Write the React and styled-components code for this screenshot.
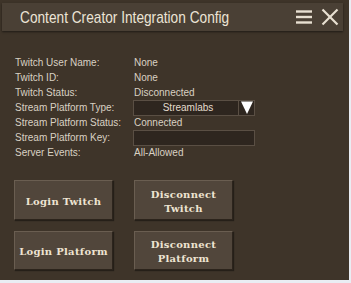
import React from "react";
import styled, { createGlobalStyle } from "styled-components";

const Global = createGlobalStyle`
  html, body { margin: 0; padding: 0; background: #e9edf3; }
  #root { width: 351px; height: 283px; }
`;

const Panel = styled.div`
  width: 349px;
  height: 280px;
  background: #3e3429;
  box-sizing: border-box;
  padding: 3px 6px 0 2px;
  display: flex;
  flex-direction: column;
`;

const Header = styled.div`
  height: 28px;
  background: #4a4035;
  box-shadow: 0 1px 2px rgba(0,0,0,0.5);
  display: flex;
  align-items: center;
  padding: 0 4px 0 18px;
  font-family: "Liberation Sans", Arial, sans-serif;
  font-size: 17px;
  color: #ece4d6;
`;

const TitleWrap = styled.div`
  flex: 1;
  margin-top: 1px;
  white-space: nowrap;
`;

const Title = styled.span`
  display: inline-block;
  transform: scaleX(0.805);
  transform-origin: 0 50%;
`;

const Icons = styled.div`
  display: flex;
  align-items: center;
  gap: 8px;
`;

const Form = styled.div`
  display: grid;
  grid-template-columns: 119px 121px;
  grid-auto-rows: 15px;
  margin: 24px 0 0 13px;
  font-family: "Liberation Sans", Arial, sans-serif;
  font-size: 10px;
  color: #d9d1c3;
  align-items: center;
`;

const Cell = styled.div`
  white-space: nowrap;
`;

const Select = styled.div`
  height: 16px;
  display: flex;
  border: 1px solid #5a4f44;
  background: #2e261f;
  box-sizing: border-box;
  margin-left: -1px;
`;

const SelectText = styled.div`
  flex: 1;
  text-align: center;
  line-height: 14px;
  color: #e4dccd;
  padding-left: 4px;
`;

const Arrow = styled.div`
  width: 15px;
  border-left: 1px solid #5a4f44;
  display: flex;
  align-items: center;
  justify-content: center;
`;

const Input = styled.div`
  height: 16px;
  border: 1px solid #5a4f44;
  background: #2e261f;
  box-sizing: border-box;
  margin-left: -1px;
`;

const Buttons = styled.div`
  display: grid;
  grid-template-columns: 99px 99px;
  grid-template-rows: 40px 39px;
  column-gap: 21px;
  row-gap: 11px;
  margin: 20px 0 0 12px;
`;

const Button = styled.button`
  background: #51463b;
  border: 1px solid #6a5e51;
  border-right-color: #2c241c;
  border-bottom-color: #2c241c;
  box-shadow: 1px 1px 1px rgba(0,0,0,0.4);
  color: #eee4d2;
  font-family: "DejaVu Serif", Georgia, serif;
  font-weight: bold;
  font-size: 10px;
  letter-spacing: 0.3px;
  line-height: 14px;
  padding: 3px 0 0 0;
  cursor: pointer;
`;

const rows = [
  ["Twitch User Name:", "None"],
  ["Twitch ID:", "None"],
  ["Twitch Status:", "Disconnected"],
  ["Stream Platform Type:", "select"],
  ["Stream Platform Status:", "Connected"],
  ["Stream Platform Key:", "input"],
  ["Server Events:", "All-Allowed"],
];

export default function App() {
  return (
    <>
      <Global />
      <Panel>
        <Header>
          <TitleWrap>
            <Title>Content Creator Integration Config</Title>
          </TitleWrap>
          <Icons>
            <svg width="18" height="16" viewBox="0 0 18 16">
              <g stroke="#e8e0d2" strokeWidth="2.4">
                <line x1="1" y1="2.5" x2="17" y2="2.5" />
                <line x1="1" y1="8" x2="17" y2="8" />
                <line x1="1" y1="13.5" x2="17" y2="13.5" />
              </g>
            </svg>
            <svg width="18" height="18" viewBox="0 0 18 18">
              <g stroke="#e8e0d2" strokeWidth="2.2">
                <line x1="1.5" y1="1.5" x2="16.5" y2="16.5" />
                <line x1="16.5" y1="1.5" x2="1.5" y2="16.5" />
              </g>
            </svg>
          </Icons>
        </Header>
        <Form>
          {rows.map(([l, v]) => (
            <React.Fragment key={l}>
              <Cell>{l}</Cell>
              {v === "select" ? (
                <Select>
                  <SelectText>Streamlabs</SelectText>
                  <Arrow>
                    <svg width="12" height="13" viewBox="0 0 12 13">
                      <polygon points="0,0.5 12,0.5 6,13" fill="#ffffff" />
                    </svg>
                  </Arrow>
                </Select>
              ) : v === "input" ? (
                <Input />
              ) : (
                <Cell>{v}</Cell>
              )}
            </React.Fragment>
          ))}
        </Form>
        <Buttons>
          <Button>Login Twitch</Button>
          <Button>Disconnect<br />Twitch</Button>
          <Button>Login Platform</Button>
          <Button>Disconnect<br />Platform</Button>
        </Buttons>
      </Panel>
    </>
  );
}
